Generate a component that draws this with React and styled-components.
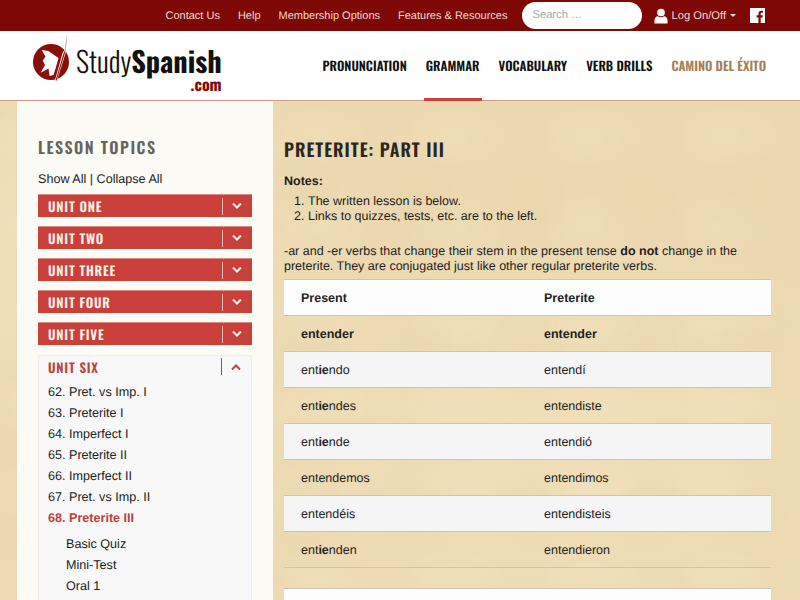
import React from 'react'
import styled, { createGlobalStyle } from 'styled-components'

const Global = createGlobalStyle`
html, body { margin: 0; padding: 0; }
body {
  font-family: "Liberation Sans", Arial, sans-serif;
  color: #222;
  font-size: 12.6px;
  text-rendering: geometricPrecision;
}
* { box-sizing: border-box; }
`

const condensed = `"Oswald", "Roboto Condensed", "Liberation Sans", sans-serif`

const Page = styled.div`
height: 600px;
width: 800px;
overflow: hidden;
`
const TopBar = styled.div`
height: 31px;
background: #7d0805;
display: flex;
align-items: center;
justify-content: flex-end;
padding-right: 35px;
`
const TopLink = styled.a`
color: #f0dcd6;
font-size: 11px;
margin-right: 18px;
white-space: nowrap;
`
const Search = styled.div`
width: 120px;
height: 27px;
margin-left: -3px;
margin-right: 12px;
border-radius: 14px;
background: #fff;
color: #a5a5a5;
font-size: 11.2px;
line-height: 27px;
padding-left: 10px;
`
const Login = styled.div`
display: flex;
align-items: center;
color: #f0dcd6;
font-size: 11.2px;
margin-right: 14px;
white-space: nowrap;
`
const Caret = styled.span`
width: 0;
height: 0;
margin-left: 4px;
border-left: 3.5px solid transparent;
border-right: 3.5px solid transparent;
border-top: 3.5px solid #f0dcd6;
`
const Header = styled.header`
height: 70px;
background: #fff;
border-bottom: 1px solid #cf9b88;
display: flex;
justify-content: space-between;
padding: 0 32px 0 32px;
`
const Logo = styled.div`
display: flex;
align-items: flex-start;
padding-top: 3px;
`
const LogoText = styled.div`
margin: 10px 0 0 6px;
font-family: ${condensed};
font-weight: 300;
font-size: 28.4px;
line-height: 34px;
color: #111;
text-align: right;
`
const LogoCom = styled.div`
font-size: 16px;
line-height: 12px;
font-weight: 700;
color: #7d0805;
`
const Strong = styled.b`
font-weight: 700;
`
const Nav = styled.nav`
display: flex;
gap: 15px;
`
const NavItem = styled.a`
height: 70px;
padding: 26px 2px 0;
font-family: ${condensed};
font-weight: 600;
font-size: 12.8px;
line-height: 18px;
white-space: nowrap;
color: ${p => (p.$gold ? '#a47f56' : '#111')};
border-bottom: ${p => (p.$active ? '3px solid #c9403a' : 'none')};
`
const Body = styled.div`
height: 499px;
padding: 0 21px 0 17px;
display: flex;
background-color: #ecd9b1;
background-image:
  radial-gradient(ellipse 60px 34px at 30% 40%, rgba(255,248,225,.09), transparent),
  radial-gradient(ellipse 44px 60px at 70% 65%, rgba(190,150,90,.04), transparent),
  radial-gradient(ellipse 300px 200px at 10% 30%, rgba(255,245,220,.2), transparent),
  radial-gradient(ellipse 400px 240px at 70% 70%, rgba(255,245,220,.18), transparent);
background-size: 137px 89px, 113px 151px, 100% 100%, 100% 100%;
`
const Sidebar = styled.aside`
width: 256px;
flex: none;
background: #fdfbf6;
padding: 34px 21px 0 21px;
`
const SideTitle = styled.h3`
margin: 0;
font-family: ${condensed};
font-weight: 600;
font-size: 16px;
line-height: 24px;
letter-spacing: 1.55px;
color: #666560;
`
const ShowAll = styled.div`
margin-top: 9px;
height: 22px;
line-height: 22px;
`
const Unit = styled.div`
height: 23px;
margin-top: ${p => (p.$first ? '4px' : '9px')};
background: #c9403a;
border-top: 1px solid #d98a80;
display: flex;
align-items: center;
color: #fdf3ea;
padding-left: 10px;
`
const UnitName = styled.span`
flex: 1;
font-family: ${condensed};
font-weight: 600;
font-size: 13px;
letter-spacing: 0.8px;
`
const UnitToggle = styled.span`
width: 30px;
height: 17px;
padding-right: 2px;
border-left: 1px solid ${p => (p.$open ? '#c9403a' : '#eebcb0')};
display: flex;
align-items: center;
justify-content: center;
`
const Panel = styled.div`
margin-top: 10px;
background: #f8f8f8;
border: 1px solid #f0efec;
padding: 0 0 0 9px;
height: 300px;
`
const PanelHead = styled.div`
height: 21px;
display: flex;
align-items: center;
color: #b8433f;
`
const Lesson = styled.div`
height: 21px;
line-height: 21px;
color: ${p => (p.$current ? '#b8433f' : '#222')};
font-weight: ${p => (p.$current ? 700 : 400)};
padding-left: ${p => (p.$sub ? '18px' : '0')};
`
const Lessons = styled.div`
margin-top: 5px;
`
const SubLessons = styled.div`
margin-top: 5px;
`
const Main = styled.main`
flex: 1;
padding: 35px 8px 0 11px;
font-size: 12.5px;
`
const Title = styled.h1`
margin: 0;
font-family: ${condensed};
font-weight: 600;
font-size: 18px;
line-height: 28px;
letter-spacing: 1px;
color: #2a2620;
`
const Notes = styled.div`
margin-top: 9px;
font-weight: 700;
line-height: 17px;
`
const NoteList = styled.ol`
margin: 4px 0 0;
padding-left: 24px;
line-height: 15px;
`
const Para = styled.p`
margin: 20px 0 0;
line-height: 15px;
`
const Table = styled.div`
margin-top: ${p => p.$mt};
border-top: 1px solid #c9c5bb;
`
const Row = styled.div`
height: 36px;
display: grid;
grid-template-columns: 243px 1fr;
padding-left: 17px;
align-items: center;
font-weight: ${p => (p.$bold ? 700 : 400)};
border-bottom: 1px solid #c9c5bb;
background: ${p => (p.$bg ? p.$bg : 'transparent')};
`
const UserGlyph = styled.svg`
margin-right: 3px;
`

const Chevron = ({ up, color }) => (
  <svg width="10" height="6" viewBox="0 0 10 6" fill="none">
    <path d={up ? 'M1 5.500l4-4 4 4' : 'M1 .5l4 4 4-4'} stroke={color} strokeWidth="2" />
  </svg>
)

const UserIcon = () => (
  <UserGlyph width="14" height="16" viewBox="0 0 16 18">
    <circle cx="8" cy="5" r="4.4" fill="#fff" />
    <path d="M0.5 17.5v-3.4c0-3 2-4.6 4-4.8 1 .8 2.2 1.2 3.5 1.2s2.500-.4 3.500-1.200c2 .2 4 1.800 4 4.800v3.400z" fill="#fff" />
  </UserGlyph>
)

const FbIcon = () => (
  <svg width="15" height="15" viewBox="0 0 16 16">
    <path d="M0 0h16v16h-4.600v-6h2l.3-2.400h-2.300V6.200c0-.7.2-1.200 1.200-1.200h1.200V2.900c-.2 0-.9-.1-1.800-.1-1.800 0-3 1.100-3 3.100v1.700h-2V10h2v6H0z" fill="#fff" />
  </svg>
)

const LogoMark = () => (
  <svg width="38" height="48" viewBox="0 0 38 48">
    <circle cx="19" cy="28" r="18" fill="#8a0f0a" />
    <path d="M9.700 16l6.600 1 10.200 7-2.500 9-2.500 8-4 1-1-7.500-7.800 4.200L13 31l-2.300-4.300 2.800-4.200z" fill="#fff" />
    <path d="M35 1l-1.500 8-.5 6-2.500 4L23 46l2 .5 8.500-27 1-5z" fill="#fff" />
    <path d="M35 1l-1.200 8-.3 6-2 4.500L23.500 46.500l1 .2 8.300-27.200 1-5z" fill="#8a0f0a" />
  </svg>
)

const units = ['UNIT ONE', 'UNIT TWO', 'UNIT THREE', 'UNIT FOUR', 'UNIT FIVE']
const lessons = ['62. Pret. vs Imp. I', '63. Preterite I', '64. Imperfect I', '65. Preterite II', '66. Imperfect II', '67. Pret. vs Imp. II']
const forms = [
  [<>ent<b>ie</b>ndo</>, 'entendí'],
  [<>ent<b>ie</b>ndes</>, 'entendiste'],
  [<>ent<b>ie</b>nde</>, 'entendió'],
  ['entendemos', 'entendimos'],
  ['entendéis', 'entendisteis'],
  [<>ent<b>ie</b>nden</>, 'entendieron'],
]

export default function App() {
  return (
    <Page>
      <Global />
      <TopBar>
        <TopLink>Contact Us</TopLink>
        <TopLink>Help</TopLink>
        <TopLink>Membership Options</TopLink>
        <TopLink>Features &amp; Resources</TopLink>
        <Search>Search …</Search>
        <Login><UserIcon />Log On/Off<Caret /></Login>
        <FbIcon />
      </TopBar>
      <Header>
        <Logo>
          <LogoMark />
          <LogoText>
            Study<Strong>Spanish</Strong>
            <LogoCom>.com</LogoCom>
          </LogoText>
        </Logo>
        <Nav>
          <NavItem>PRONUNCIATION</NavItem>
          <NavItem $active>GRAMMAR</NavItem>
          <NavItem>VOCABULARY</NavItem>
          <NavItem>VERB DRILLS</NavItem>
          <NavItem $gold>CAMINO DEL ÉXITO</NavItem>
        </Nav>
      </Header>
      <Body>
        <Sidebar>
          <SideTitle>LESSON TOPICS</SideTitle>
          <ShowAll>Show All | Collapse All</ShowAll>
          {units.map((u, i) => (
            <Unit key={u} $first={i === 0}>
              <UnitName>{u}</UnitName>
              <UnitToggle><Chevron color="#fdf3ea" /></UnitToggle>
            </Unit>
          ))}
          <Panel>
            <PanelHead>
              <UnitName>UNIT SIX</UnitName>
              <UnitToggle $open><Chevron up color="#c9403a" /></UnitToggle>
            </PanelHead>
            <Lessons>
              {lessons.map(l => <Lesson key={l}>{l}</Lesson>)}
              <Lesson $current>68. Preterite III</Lesson>
            </Lessons>
            <SubLessons>
              <Lesson $sub>Basic Quiz</Lesson>
              <Lesson $sub>Mini-Test</Lesson>
              <Lesson $sub>Oral 1</Lesson>
            </SubLessons>
          </Panel>
        </Sidebar>
        <Main>
          <Title>PRETERITE: PART III</Title>
          <Notes>Notes:</Notes>
          <NoteList>
            <li>The written lesson is below.</li>
            <li>Links to quizzes, tests, etc. are to the left.</li>
          </NoteList>
          <Para>
            -ar and -er verbs that change their stem in the present tense <b>do not</b> change in the preterite. They are conjugated just like other regular preterite verbs.
          </Para>
          <Table $mt="5px">
            <Row $bold $bg="#fdfdfd"><span>Present</span><span>Preterite</span></Row>
            <Row $bold><span>entender</span><span>entender</span></Row>
            {forms.map((f, i) => (
              <Row key={i} $bg={i % 2 === 0 ? '#f5f5f5' : null}>
                <span>{f[0]}</span><span>{f[1]}</span>
              </Row>
            ))}
          </Table>
          <Table $mt="20px">
            <Row $bg="#fdfdfd" />
          </Table>
        </Main>
      </Body>
    </Page>
  )
}
